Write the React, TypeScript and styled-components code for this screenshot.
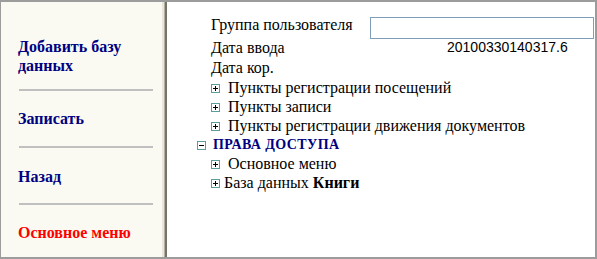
import React from "react";
import styled, { createGlobalStyle } from "styled-components";

const Global = createGlobalStyle`
  html, body { margin: 0; padding: 0; background: #fff; }
  body { font-family: "Liberation Serif", "Times New Roman", serif; }
`;

const Frame = styled.div`
  box-sizing: border-box;
  width: 597px;
  height: 259px;
  border-style: solid;
  border-color: #9c9c9c;
  border-width: 2px 2px 2px 1px;
  display: flex;
  overflow: hidden;
`;

const Sidebar = styled.nav`
  width: 161px;
  flex: none;
  background: #fafaf2;
  padding: 35px 0 0 17px;
  box-sizing: border-box;
  display: flex;
  flex-direction: column;
  align-items: flex-start;
`;

const Divider = styled.div`
  width: 5px;
  flex: none;
  background: linear-gradient(
    to right,
    #e9e7db 0,
    #e9e7db 2px,
    #b3b0a3 2px,
    #b3b0a3 3px,
    #77746a 3px,
    #77746a 5px
  );
`;

const NavLink = styled.a<{ $red?: boolean }>`
  font-weight: bold;
  font-size: 16px;
  line-height: 19px;
  color: ${(p) => (p.$red ? "#ff0000" : "#000080")};
  text-decoration: none;
  width: 130px;
`;

const Sep = styled.div<{ $top: number; $bottom: number }>`
  width: 134px;
  height: 2px;
  margin: ${(p) => `${p.$top}px 0 ${p.$bottom}px 1px`};
  background: #c0c0c0;
`;

const Main = styled.main`
  flex: 1;
  background: #fff;
  padding: 13px 0 0 44px;
  font-size: 16px;
  line-height: 19px;
  color: #000;
`;

const Fields = styled.div`
  display: grid;
  grid-template-columns: 159px 1fr;
  grid-template-rows: 23px 20px 20px;
`;

const Label = styled.span`
  grid-column: 1;
`;

const Input = styled.input`
  box-sizing: border-box;
  width: 224px;
  height: 22px;
  margin: 2px 0 0;
  padding: 0;
  border: 1px solid #7f9db9;
  align-self: start;
`;

const Value = styled.span`
  font-family: "Liberation Sans", Arial, sans-serif;
  font-size: 14px;
  padding-left: 77px;
`;

const Tree = styled.div`
  display: flex;
  flex-direction: column;
`;

const TreeRow = styled.div<{ $indent?: number; $gap?: number }>`
  display: flex;
  align-items: flex-start;
  height: 19px;
  margin-left: ${(p) => p.$indent ?? 0}px;
  gap: ${(p) => p.$gap ?? 8}px;
  white-space: nowrap;
`;

const Toggle = styled.span`
  box-sizing: border-box;
  width: 9px;
  height: 9px;
  margin-top: 6px;
  border: 1px solid #5c9c9c;
  position: relative;
  flex: none;
  &::before {
    content: "";
    position: absolute;
    left: 1px;
    top: 3px;
    width: 5px;
    height: 1px;
    background: #000;
  }
`;

const Plus = styled(Toggle)`
  &::after {
    content: "";
    position: absolute;
    left: 3px;
    top: 1px;
    width: 1px;
    height: 5px;
    background: #000;
  }
`;

const Section = styled.span`
  font-weight: bold;
  font-size: 14px;
  letter-spacing: 0.4px;
  color: #000080;
`;

const Plain = styled.span``;

const App: React.FC = () => (
  <>
    <Global />
    <Frame>
      <Sidebar>
        <NavLink href="#">Добавить базу данных</NavLink>
        <Sep $top={14} $bottom={18} />
        <NavLink href="#">Записать</NavLink>
        <Sep $top={18} $bottom={19} />
        <NavLink href="#">Назад</NavLink>
        <Sep $top={17} $bottom={18} />
        <NavLink href="#" $red>Основное меню</NavLink>
      </Sidebar>
      <Divider />
      <Main>
        <Fields>
          <Label>Группа пользователя</Label>
          <Input type="text" />
          <Label>Дата ввода</Label>
          <Value>20100330140317.6</Value>
          <Label>Дата кор.</Label>
        </Fields>
        <Tree>
          <TreeRow><Plus /><Plain>Пункты регистрации посещений</Plain></TreeRow>
          <TreeRow><Plus /><Plain>Пункты записи</Plain></TreeRow>
          <TreeRow><Plus /><Plain>Пункты регистрации движения документов</Plain></TreeRow>
          <TreeRow $indent={-14} $gap={7}><Toggle /><Section>ПРАВА ДОСТУПА</Section></TreeRow>
          <TreeRow><Plus /><Plain>Основное меню</Plain></TreeRow>
          <TreeRow $gap={4}><Plus /><Plain>База данных <b>Книги</b></Plain></TreeRow>
        </Tree>
      </Main>
    </Frame>
  </>
);

export default App;
